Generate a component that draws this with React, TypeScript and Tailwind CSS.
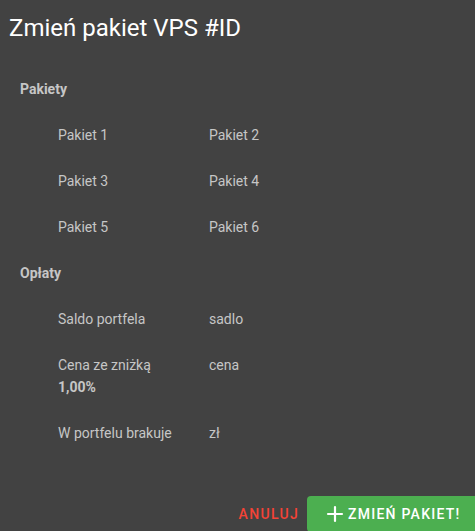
import { Plus } from "lucide-react";

type Row = { label: string; value: string; note?: string };

const packageRows: [string, string][] = [
  ["Pakiet 1", "Pakiet 2"],
  ["Pakiet 3", "Pakiet 4"],
  ["Pakiet 5", "Pakiet 6"],
];

const feeRows: Row[] = [
  { label: "Saldo portfela", value: "sadlo" },
  { label: "Cena ze zniżką", value: "cena", note: "1,00%" },
  { label: "W portfelu brakuje", value: "zł" },
];

function SectionHeader({ children }: { children: string }) {
  return (
    <div className="py-[13px] pl-[20px] text-[14px] leading-5 font-bold text-[#c6c6c6]">
      {children}
    </div>
  );
}

function Line({ left, right, note }: { left: string; right: string; note?: string }) {
  return (
    <div className="flex py-[13px] text-[14px] leading-5 text-[#c6c6c6]">
      <div className="w-[151px] pl-[58px] box-content shrink-0">
        <div>{left}</div>
        {note && <div className="mt-[2px] font-bold">{note}</div>}
      </div>
      <div>{right}</div>
    </div>
  );
}

export default function App() {
  return (
    <div
      className="flex h-[531px] w-[475px] flex-col overflow-hidden bg-[#424242] pt-[12px]"
      style={{ fontFamily: "Roboto, 'Liberation Sans', sans-serif" }}
    >
      <h2 className="px-[9px] text-[24px] leading-8 font-normal text-white">Zmień pakiet VPS #ID</h2>

      <div className="mt-[22px]">
        <SectionHeader>Pakiety</SectionHeader>
        {packageRows.map(([a, b]) => (
          <Line key={a} left={a} right={b} />
        ))}
        <SectionHeader>Opłaty</SectionHeader>
        {feeRows.map((r) => (
          <Line key={r.label} left={r.label} right={r.value} note={r.note} />
        ))}
      </div>

      <div className="mt-[40px] flex shrink-0 items-center justify-end">
        <button className="mr-[8px] h-9 text-[14px] font-medium tracking-[1.3px] text-[#f44336]">
          ANULUJ
        </button>
        <button className="flex h-9 w-[168px] shrink-0 items-center rounded-l-[4px] bg-[#4caf50] pl-4 text-[14px] font-medium tracking-[1.25px] text-white">
          <Plus className="h-6 w-6" strokeWidth={2.2} />
          <span className="ml-[1px] whitespace-nowrap">ZMIEŃ PAKIET!</span>
        </button>
      </div>
    </div>
  );
}
